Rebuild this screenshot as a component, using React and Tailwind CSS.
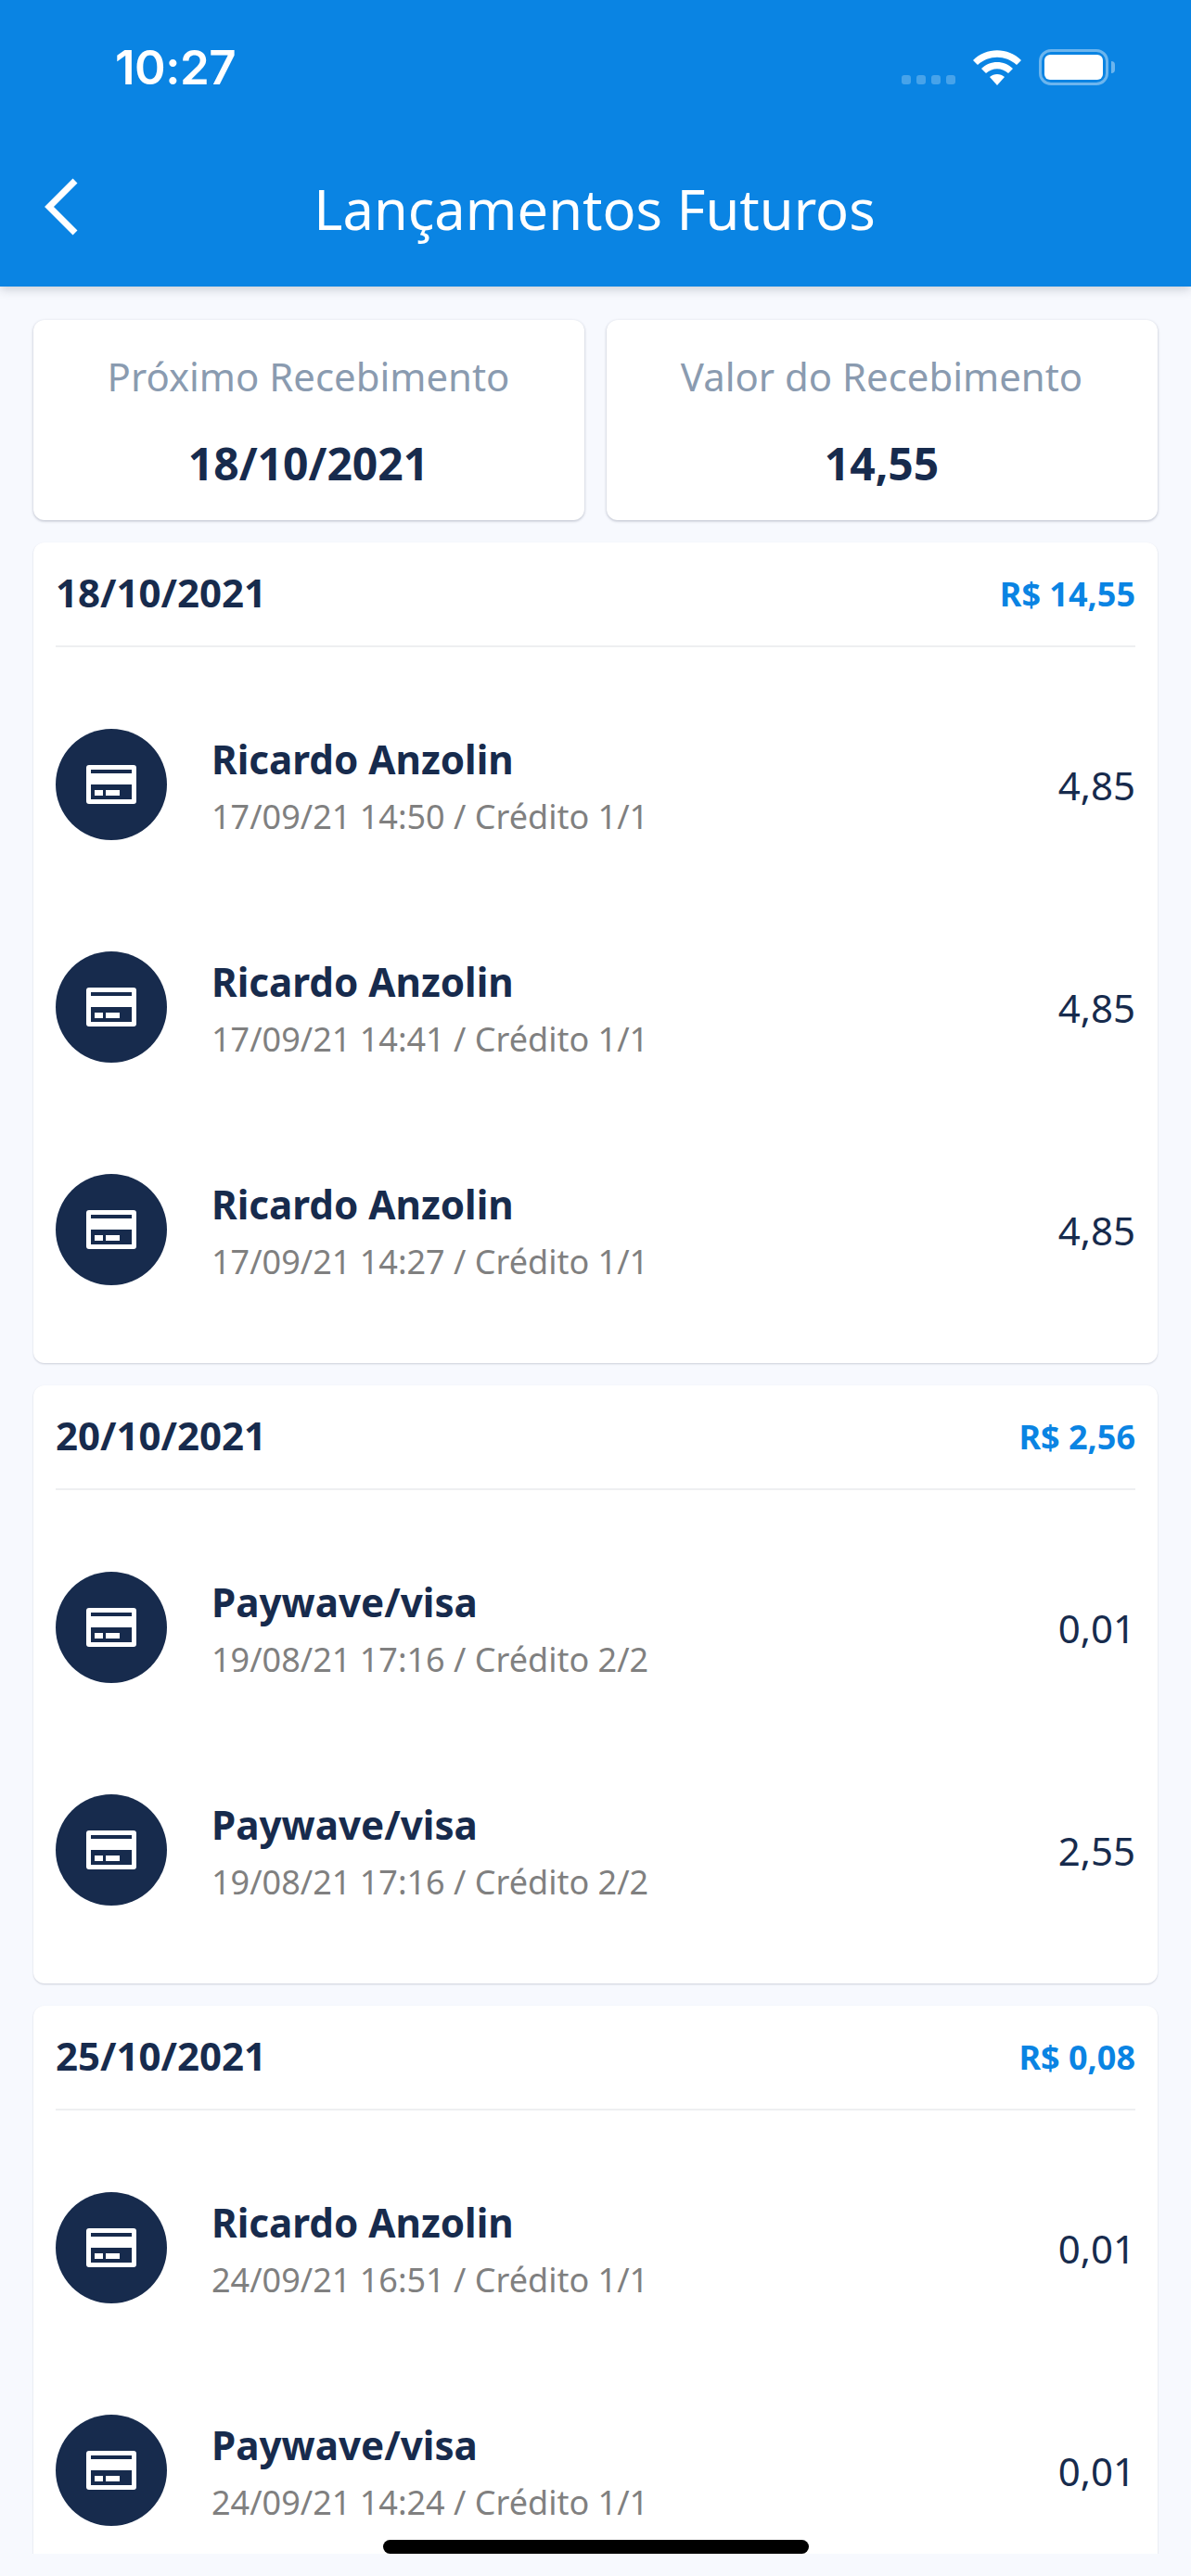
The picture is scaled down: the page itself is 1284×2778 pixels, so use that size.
import React from 'react';

const groups = [
    {
        date: '18/10/2021',
        total: 'R$ 14,55',
        items: [
            { name: 'Ricardo Anzolin', info: '17/09/21 14:50 / Crédito 1/1', value: '4,85' },
            { name: 'Ricardo Anzolin', info: '17/09/21 14:41 / Crédito 1/1', value: '4,85' },
            { name: 'Ricardo Anzolin', info: '17/09/21 14:27 / Crédito 1/1', value: '4,85' },
        ],
    },
    {
        date: '20/10/2021',
        total: 'R$ 2,56',
        items: [
            { name: 'Paywave/visa', info: '19/08/21 17:16 / Crédito 2/2', value: '0,01' },
            { name: 'Paywave/visa', info: '19/08/21 17:16 / Crédito 2/2', value: '2,55' },
        ],
    },
    {
        date: '25/10/2021',
        total: 'R$ 0,08',
        items: [
            { name: 'Ricardo Anzolin', info: '24/09/21 16:51 / Crédito 1/1', value: '0,01' },
            { name: 'Paywave/visa', info: '24/09/21 14:24 / Crédito 1/1', value: '0,01' },
        ],
    },
];

function StatusIcons() {
    return (
        <div className="flex items-end">
            <div className="flex gap-[6px] mb-[1px]">
                <span className="w-[10px] h-[10px] rounded-[3px] bg-white/25"></span>
                <span className="w-[10px] h-[10px] rounded-[3px] bg-white/25"></span>
                <span className="w-[10px] h-[10px] rounded-[3px] bg-white/25"></span>
                <span className="w-[10px] h-[10px] rounded-[3px] bg-white/25"></span>
            </div>
            <svg className="ml-[19px]" width="52" height="38" viewBox="0 0 52 38" fill="#fff">
                <path d="M0 11 C14 -3.5 38 -3.5 52 11 L47 16 C35 5 17 5 5 16 Z" />
                <path d="M9 20 C18 10.5 34 10.5 43 20 L38 25 C31 18.5 21 18.5 14 25 Z" />
                <path d="M18 29 C22.5 25 29.5 25 34 29 L26 38 Z" />
            </svg>
            <div className="ml-[19px] w-[75px] h-[39px] rounded-[13px] border-[3px] border-white/40 p-[3px]">
                <div className="w-full h-full rounded-[6px] bg-white"></div>
            </div>
            <span className="ml-[3px] mb-[13px] w-[4px] h-[13px] rounded-r-[4px] bg-white/40"></span>
        </div>
    );
}

function Header() {
    return (
        <header className="relative z-10 h-[309px] shrink-0 bg-[#0a84e3] shadow-[0_3px_10px_rgba(40,50,70,0.22)]">
            <div className="flex items-start justify-between pt-[53px] pl-[124px] pr-[82px] h-[150px]">
                <span className="font-['Inter'] font-semibold text-[51px] leading-[39px] text-white tracking-[-0.5px]">10:27</span>
                <StatusIcons />
            </div>
            <div className="relative flex items-center justify-center h-[100px] mt-[25px] pr-[2px]">
                <svg className="absolute left-[47px] top-[16px]" width="40" height="64" viewBox="0 0 40 64" fill="none">
                    <path d="M34 4 L6 32 L34 60" stroke="#fff" strokeWidth="7" />
                </svg>
                <h1 className="font-['Noto_Sans'] font-normal text-[59.6px] leading-[80px] text-white">Lançamentos Futuros</h1>
            </div>
        </header>
    );
}

function SummaryCard({ label, value }) {
    return (
        <div className="flex-1 h-[216px] rounded-[12px] bg-white shadow-[0_1px_3px_rgba(30,40,70,0.3)] flex flex-col items-center pt-[31px] pr-[1px]">
            <span className="font-['Noto_Sans'] text-[41.9px] leading-[60px] text-[#8a9bb0]">{label}</span>
            <span className="font-['Noto_Sans'] font-bold text-[48px] leading-[64px] mt-[32px] text-[#172b4d]">{value}</span>
        </div>
    );
}

function CardIcon() {
    return (
        <div className="w-[120px] h-[120px] rounded-full bg-[#172b4d] flex items-center justify-center shrink-0">
            <svg width="54" height="42" viewBox="0 0 54 42">
                <rect width="54" height="42" rx="3" fill="#fff" />
                <rect x="5" y="5" width="44" height="4" fill="#172b4d" />
                <rect x="5" y="21" width="44" height="16" fill="#172b4d" />
                <rect x="9" y="27" width="9" height="6" fill="#fff" />
                <rect x="21" y="27" width="15" height="6" fill="#fff" />
            </svg>
        </div>
    );
}

function Row({ item }) {
    return (
        <div className="h-[240px] flex items-center">
            <CardIcon />
            <div className="ml-[48px] flex-1 font-['Noto_Sans'] mt-[8px]">
                <div className="font-bold text-[42.2px] leading-[62px] text-[#172b4d]">{item.name}</div>
                <div className="text-[36px] leading-[62px] text-[#808080]">{item.info}</div>
            </div>
            <span className="font-['Noto_Sans'] text-[42px] leading-[60px] mt-[2px] text-[#172b4d]">{item.value}</span>
        </div>
    );
}

function Group({ group }) {
    return (
        <section className="rounded-[12px] bg-white px-[24px] pb-[24px] shadow-[0_1px_2px_rgba(30,40,70,0.2)] shrink-0">
            <div className="h-[113px] flex items-center justify-between border-b-2 border-[#eeeff1] font-['Noto_Sans'] font-bold">
                <span className="text-[42px] text-[#172b4d] mt-[-4px]">{group.date}</span>
                <span className="text-[36px] text-[#0a84e3]">{group.total}</span>
            </div>
            <div className="pt-[28px]">
                {group.items.map((item, i) => (
                    <Row key={i} item={item} />
                ))}
            </div>
        </section>
    );
}

export default function App() {
    return (
        <div className="w-[1284px] h-[2778px] bg-[#f7f9fe] flex flex-col overflow-hidden">
            <Header />
            <main className="relative h-[2445px] overflow-hidden px-[36px] pt-[36px] flex flex-col gap-[24px]">
                <div className="flex gap-[24px] shrink-0">
                    <SummaryCard label="Próximo Recebimento" value="18/10/2021" />
                    <SummaryCard label="Valor do Recebimento" value="14,55" />
                </div>
                {groups.map((group) => (
                    <Group key={group.date} group={group} />
                ))}
                <div className="absolute left-[413px] top-[2430px] w-[459px] h-[15px] rounded-full bg-black"></div>
            </main>
        </div>
    );
}
